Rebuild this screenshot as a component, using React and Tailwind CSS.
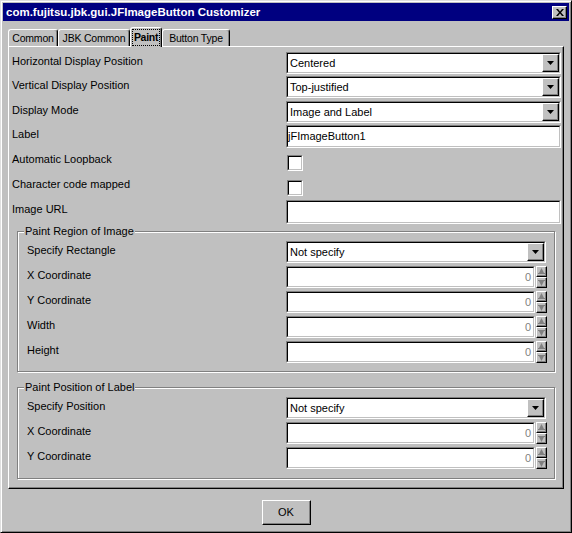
import React from "react";

const raised =
  "border border-t-white border-l-white border-r-black border-b-black shadow-[inset_-1px_-1px_0_#808080]";

const Sunken = ({ className = "", inner = "", children }) => (
  <div
    className={`border border-t-[#808080] border-l-[#808080] border-r-white border-b-white ${className}`}
  >
    <div
      className={`h-full w-full border border-t-black border-l-black border-r-[#c0c0c0] border-b-[#c0c0c0] bg-white ${inner}`}
    >
      {children}
    </div>
  </div>
);

const Combo = ({ value, width = "w-[275px]" }) => (
  <Sunken className={`${width} h-[22px]`} inner="flex items-center">
    <span className="flex-1 pl-[2px] leading-[13px]">{value}</span>
    <div className={`${raised} flex h-full w-[17px] items-center justify-center bg-[#c0c0c0]`}>
      <svg width="7" height="4" viewBox="0 0 7 4">
        <path d="M0 0h7L3.5 4z" fill="black" />
      </svg>
    </div>
  </Sunken>
);

const Arrow = ({ down }) => (
  <svg width="7" height="7" viewBox="0 0 7 7" className={down ? "rotate-180" : ""}>
    <path d="M3.5 0L6 5H1z" fill="#808080" />
    <rect x="0" y="5" width="7" height="1" fill="#808080" />
  </svg>
);

const Spin = () => (
  <div className="flex h-[22px]">
    <Sunken className="h-[22px] w-[249px]" inner="flex items-center justify-end pr-[2px]">
      <span className="leading-[13px] text-[#808080]">0</span>
    </Sunken>
    <div className="ml-[1px] flex w-[11px] flex-col">
      <div className={`${raised} flex h-[11px] items-center justify-center bg-[#c0c0c0]`}>
        <Arrow />
      </div>
      <div className={`${raised} flex h-[11px] items-center justify-center bg-[#c0c0c0]`}>
        <Arrow down />
      </div>
    </div>
  </div>
);

const Check = () => <Sunken className="ml-[1px] mt-[5px] h-[16px] w-[16px]" />;

const Row = ({ label, h = "h-[25px]", col = "w-[274px]", children }) => (
  <div className={`flex ${h}`}>
    <div className={`${col} shrink-0 pt-[3px] leading-[13px]`}>{label}</div>
    <div>{children}</div>
  </div>
);

const Group = ({ title, className = "", children }) => (
  <div
    className={`relative ml-[5px] w-[538px] border border-[#808080] pl-[9px] pt-[9px] shadow-[inset_1px_1px_0_#fff,1px_1px_0_#fff] ${className}`}
  >
    <span className="absolute -top-[7px] left-[6px] bg-[#c0c0c0] px-[1px] leading-[13px]">
      {title}
    </span>
    {children}
  </div>
);

const Tab = ({ label, width, active }) => (
  <div
    className={`${width} ${
      active ? "relative z-10 -mb-[1px] h-[20px] font-bold" : "h-[17px]"
    } flex items-center justify-center rounded-t-[3px] border-l border-r border-t border-l-white border-r-black border-t-white bg-[#c0c0c0] text-[10.5px] shadow-[inset_-1px_0_0_#808080]`}
  >
    {active ? (
      <span className="px-[1px] leading-[15px] tracking-[-0.3px] outline outline-1 outline-dotted outline-black">
        {label}
      </span>
    ) : (
      <span className="pt-[1px] leading-[13px] tracking-[-0.2px]">{label}</span>
    )}
  </div>
);

const App = () => {
  return (
    <div className="h-[533px] w-[572px] bg-[#c0c0c0] font-['Liberation_Sans',Arial,sans-serif] text-[11px] text-black">
      <div className="flex h-full w-full flex-col border border-b-black border-l-[#dfdfdf] border-r-black border-t-[#dfdfdf] p-[2px] shadow-[inset_1px_1px_0_#fff,inset_-1px_-1px_0_#808080]">
        {/* title bar */}
        <div className="flex h-[18px] items-center justify-between bg-[#000080] pl-[3px] pr-[2px]">
          <span className="text-[11.5px] font-bold leading-[14px] text-white">
            com.fujitsu.jbk.gui.JFImageButton Customizer
          </span>
          <div className={`${raised} flex h-[13px] w-[15px] items-center justify-center bg-[#c0c0c0]`}>
            <svg width="8" height="7" viewBox="0 0 8 7">
              <path d="M0 0h2l2 2.5L6 0h2L5 3.5 8 7H6L4 4.5 2 7H0l3-3.5z" fill="black" />
            </svg>
          </div>
        </div>

        <div className="px-[5px]">
          {/* tabs */}
          <div className="mt-[6px] flex h-[19px] items-end">
            <Tab label="Common" width="w-[50px]" />
            <Tab label="JBK Common" width="w-[72px]" />
            <Tab label="Paint" width="w-[32px]" active />
            <Tab label="Button Type" width="w-[68px]" />
          </div>

          {/* panel */}
          <div className={`h-[443px] w-[556px] ${raised} pl-[3px] pt-[5px]`}>
            <Row label="Horizontal Display Position" h="h-[24px]">
              <Combo value="Centered" />
            </Row>
            <Row label="Vertical Display Position">
              <Combo value="Top-justified" />
            </Row>
            <Row label="Display Mode" h="h-[24px]">
              <Combo value="Image and Label" />
            </Row>
            <Row label="Label">
              <Sunken className="h-[23px] w-[275px]" inner="flex items-center">
                <span className="leading-[13px]">jFImageButton1</span>
              </Sunken>
            </Row>
            <Row label="Automatic Loopback">
              <Check />
            </Row>
            <Row label="Character code mapped">
              <Check />
            </Row>
            <Row label="Image URL" h="h-[24px]">
              <Sunken className="h-[24px] w-[275px]" />
            </Row>

            <Group title="Paint Region of Image" className="mt-[7px] pb-[5px]">
              <Row label="Specify Rectangle" col="w-[259px]">
                <Combo value="Not specify" width="w-[260px]" />
              </Row>
              <Row label="X Coordinate" col="w-[259px]">
                <Spin />
              </Row>
              <Row label="Y Coordinate" col="w-[259px]">
                <Spin />
              </Row>
              <Row label="Width" col="w-[259px]">
                <Spin />
              </Row>
              <Row label="Height" col="w-[259px]">
                <Spin />
              </Row>
            </Group>

            <Group title="Paint Position of Label" className="mt-[15px] pb-[6px]">
              <Row label="Specify Position" col="w-[259px]">
                <Combo value="Not specify" width="w-[260px]" />
              </Row>
              <Row label="X Coordinate" col="w-[259px]">
                <Spin />
              </Row>
              <Row label="Y Coordinate" col="w-[259px]">
                <Spin />
              </Row>
            </Group>
          </div>

          {/* buttons */}
          <div className="mt-[11px] flex justify-center">
            <div className={`${raised} flex h-[25px] w-[49px] items-center justify-center`}>
              <span className="leading-[13px]">OK</span>
            </div>
          </div>
        </div>
      </div>
    </div>
  );
};

export default App;
